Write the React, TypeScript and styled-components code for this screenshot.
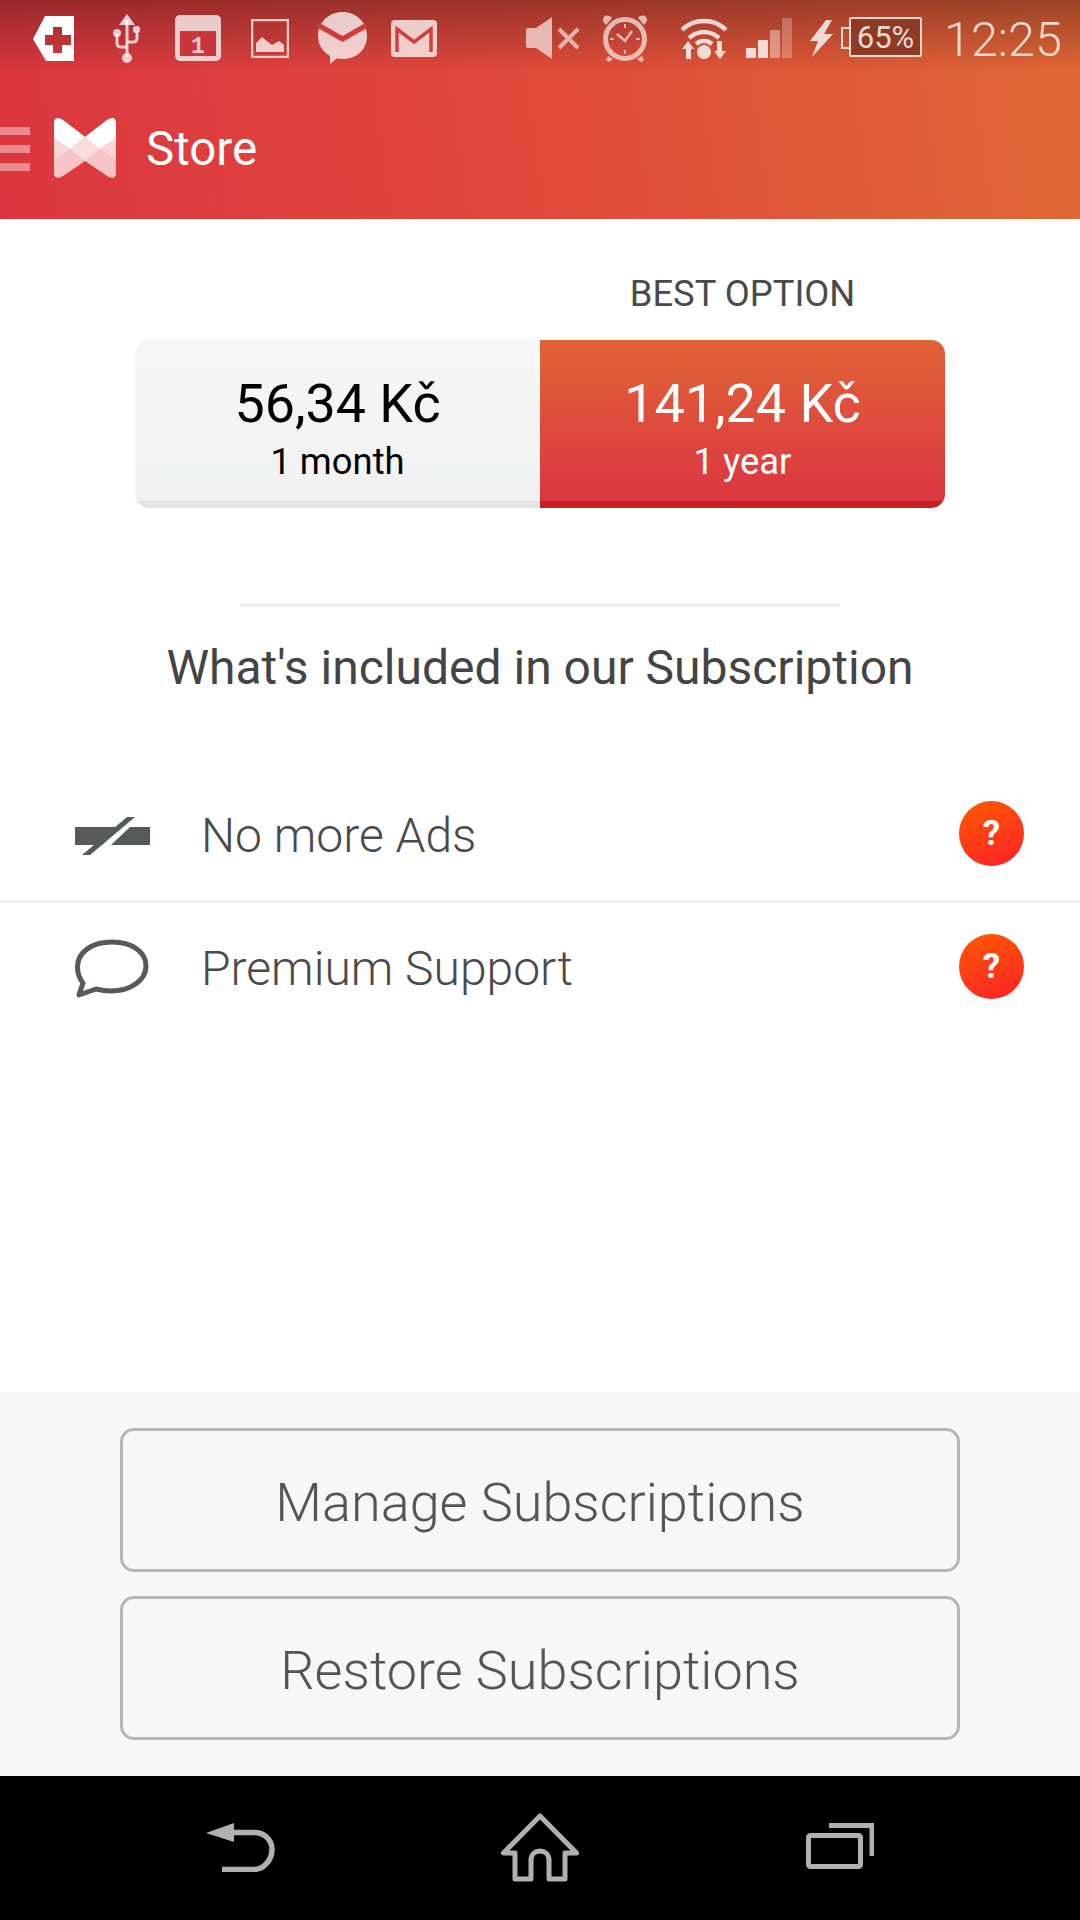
import React from 'react';
import styled, { createGlobalStyle } from 'styled-components';

const GlobalStyle = createGlobalStyle`
  html, body {
    margin: 0;
    padding: 0;
    background: #fff;
    font-family: Roboto, "Noto Sans", sans-serif;
  }
`;

const Screen = styled.div`
  width: 1080px;
  height: 1920px;
  display: flex;
  flex-direction: column;
  overflow: hidden;
`;

const Header = styled.header`
  height: 219px;
  flex: none;
  background:
    linear-gradient(180deg, rgba(60, 20, 20, 0.42) 0, rgba(60, 20, 20, 0) 72px),
    linear-gradient(82deg, #dc3640 0%, #e04a3a 50%, #e16835 100%);
`;

const StatusBar = styled.div`
  height: 76px;
  display: flex;
  align-items: center;
  color: rgba(255, 255, 255, 0.75);
`;

const StatusSlot = styled.span<{ $gap: number }>`
  display: flex;
  flex: none;
  margin-left: ${props => props.$gap}px;
`;

const Battery = styled.div`
  position: relative;
  margin-left: 16px;
  width: 73px;
  height: 40px;
  box-sizing: border-box;
  margin-top: -2px;
  border: 2.5px solid rgba(255, 255, 255, 0.8);
  border-radius: 2px;
  background: #8f3a22;
  display: flex;
  align-items: center;
  justify-content: center;
  font-size: 31px;
  color: rgba(255, 255, 255, 0.82);

  &::before {
    content: '';
    position: absolute;
    left: -10px;
    top: 8px;
    width: 8px;
    height: 18px;
    border: 2.5px solid rgba(255, 255, 255, 0.8);
    border-right: none;
  }
`;

const Clock = styled.div`
  margin-left: 22px;
  margin-top: 4px;
  font-size: 48.5px;
  font-weight: 300;
  color: rgba(255, 255, 255, 0.78);
  line-height: 1;
`;

const AppBar = styled.div`
  height: 143px;
  display: flex;
  align-items: center;
`;

const Burger = styled.div`
  width: 30px;
  display: flex;
  flex-direction: column;
  gap: 10px;
  margin-top: 3px;

  span {
    height: 8px;
    background: rgba(255, 255, 255, 0.42);
  }
`;

const LogoSlot = styled.div`
  display: flex;
  margin-left: 24px;
`;

const AppTitle = styled.div`
  margin-left: 30px;
  margin-top: 3px;
  font-size: 47.5px;
  color: #fff;
`;

const Content = styled.main`
  flex: 1;
  display: flex;
  flex-direction: column;
  background: #fff;
`;

const Pricing = styled.section`
  width: 810px;
  margin: 55px auto 0;
  display: grid;
  grid-template-columns: 405px 405px;
`;

const BestLabel = styled.div`
  grid-column: 2;
  height: 40px;
  line-height: 40px;
  margin-bottom: 26px;
  text-align: center;
  font-size: 36.4px;
  color: #4a4a4a;
`;

const Segments = styled.div`
  grid-column: 1 / 3;
  display: grid;
  grid-template-columns: 1fr 1fr;
  border-radius: 14px;
  overflow: hidden;
  height: 168px;
`;

const Segment = styled.div<{ $selected?: boolean }>`
  box-sizing: border-box;
  display: flex;
  flex-direction: column;
  align-items: center;
  padding-top: 32px;
  color: ${props => (props.$selected ? '#fff' : '#000')};
  background: ${props =>
    props.$selected
      ? 'linear-gradient(180deg, #e16336, #dc3641)'
      : 'linear-gradient(180deg, #f7f7f7, #f0f1f2)'};
  border-bottom: 7px solid ${props => (props.$selected ? '#c82023' : '#e3e4e4')};
`;

const Price = styled.div`
  font-size: 53.8px;
  line-height: 64px;
`;

const Period = styled.div`
  font-size: 36.4px;
  line-height: 44px;
  margin-top: 4px;
`;

const Rule = styled.hr`
  width: 600px;
  height: 4px;
  margin: 95px auto 0;
  border: none;
  background: #f0f0f0;
`;

const SectionTitle = styled.h2`
  margin: 31px 0 0;
  height: 60px;
  line-height: 60px;
  text-align: center;
  font-size: 48px;
  font-weight: 400;
  color: #444;
`;

const FeatureList = styled.div`
  margin-top: 73px;
`;

const Feature = styled.div<{ $divided?: boolean }>`
  box-sizing: border-box;
  height: ${props => (props.$divided ? 132 : 130)}px;
  display: flex;
  align-items: center;
  padding: 0 56px 0 75px;
  border-bottom: ${props => (props.$divided ? '3px solid #f0f0f0' : 'none')};
`;

const FeatureIcon = styled.div`
  width: 126px;
  flex: none;
  display: flex;
`;

const FeatureText = styled.div`
  flex: 1;
  font-size: 48px;
  font-weight: 300;
  color: #4a4a4a;
`;

const HelpBadge = styled.div`
  width: 65px;
  height: 65px;
  margin-bottom: 4px;
  border-radius: 50%;
  display: flex;
  align-items: center;
  justify-content: center;
  background: linear-gradient(160deg, #fe5a03, #fd2127);
  color: #fff;
  font-size: 35px;
  font-weight: 700;
`;

const Footer = styled.section`
  height: 384px;
  flex: none;
  box-sizing: border-box;
  padding: 36px 120px 0;
  display: flex;
  flex-direction: column;
  gap: 24px;
  background: #f7f7f7;
`;

const OutlineButton = styled.button`
  height: 144px;
  padding: 4px 0 0;
  border: 3px solid #b5b5b5;
  border-radius: 14px;
  background: transparent;
  font-family: inherit;
  font-size: 54px;
  font-weight: 300;
  color: #555;
`;

const NavBar = styled.nav`
  height: 144px;
  flex: none;
  background: #000;
  display: grid;
  grid-template-columns: repeat(3, 300px);
  padding: 0 90px;
`;

const NavSlot = styled.div<{ $shift: number }>`
  display: flex;
  align-items: center;
  justify-content: center;
  margin-top: ${props => props.$shift}px;
`;

const CrossIcon = () => (
  <svg width="41" height="45" viewBox="0 0 41 45">
    <path
      fill="#fff"
      fillRule="evenodd"
      d="M41 0H12L0 23l13 22h28ZM20 11h9v8h9v10h-9v8h-9v-8h-8V19h8Z"
    />
  </svg>
);

const UsbIcon = () => (
  <svg width="28" height="49" viewBox="0 0 28 49" fill="none" stroke="currentColor" strokeWidth="3">
    <path d="M15 6v37" />
    <path d="M15 33H9c-3 0-4-1-4-4v-9" />
    <path d="M15 28h6c3 0 4-1 4-4v-7" />
    <path fill="currentColor" stroke="none" d="M15 0l8 11H7Z" />
    <circle cx="15" cy="44" r="5" fill="currentColor" stroke="none" />
    <circle cx="5" cy="19" r="4" fill="currentColor" stroke="none" />
    <rect x="21" y="12" width="7" height="7" rx="3" fill="currentColor" stroke="none" />
  </svg>
);

const CalendarIcon = () => (
  <svg width="46" height="46" viewBox="0 0 46 46">
    <rect width="46" height="46" rx="5" fill="currentColor" />
    <rect x="5" y="16" width="36" height="25" fill="#c9373c" />
    <text x="23" y="38" textAnchor="middle" fontFamily="Liberation Mono, monospace" fontWeight="700" fontSize="23" fill="currentColor">1</text>
  </svg>
);

const PictureIcon = () => (
  <svg width="38" height="39" viewBox="0 0 38 39">
    <rect x="1" y="1" width="36" height="37" fill="none" stroke="currentColor" strokeWidth="2.5" />
    <path fill="currentColor" d="M5 33V24l6-6 6 5 4 3 7-4 5 4v7Z" />
  </svg>
);

const ChatIcon = () => (
  <svg width="49" height="52" viewBox="0 0 49 52">
    <path fill="currentColor" d="M24.5 0C38 0 49 10 49 24S38 47 24.5 47c-2 0-4-.3-5.5-.7L12 52l0-8C5 40 0 33 0 24 0 10 11 0 24.5 0Z" />
    <path fill="none" stroke="#d03b3c" strokeWidth="5" d="M0 13l24.5 14L49 13" />
  </svg>
);

const GmailIcon = () => (
  <svg width="46" height="37" viewBox="0 0 46 37">
    <rect width="46" height="37" rx="4" fill="currentColor" />
    <path fill="none" stroke="#d2403b" strokeWidth="3.5" d="M6 32V9l17 13L40 9v23" />
  </svg>
);

const MuteIcon = () => (
  <svg width="54" height="42" viewBox="0 0 54 42">
    <path fill="currentColor" opacity="0.85" d="M0 13q0-2 2-2h8L26 0v42L10 31H2q-2 0-2-2Z" />
    <path stroke="currentColor" opacity="0.8" strokeWidth="4" d="M33 12l19 19M52 12L33 31" />
  </svg>
);

const AlarmIcon = () => (
  <svg width="46" height="48" viewBox="0 0 46 48" fill="none" stroke="currentColor" opacity="0.85">
    <circle cx="23" cy="25" r="19.5" strokeWidth="5" />
    <path strokeWidth="2" d="M23 10v4M23 36v4M8 25h4M34 25h4" />
    <path strokeWidth="2.5" d="M15 20l8 7 7-10" />
    <path fill="currentColor" stroke="none" d="M4 11l6-7c-3-3-6-3-8-1s-1 5 2 8ZM42 11l-6-7c3-3 6-3 8-1s1 5-2 8ZM6 42l5 3-4 3-3-2ZM40 42l-5 3 4 3 3-2Z" />
  </svg>
);

const WifiIcon = () => (
  <svg width="46" height="42" viewBox="0 0 46 42" fill="none" stroke="#fff" strokeWidth="4.5" opacity="0.8">
    <path d="M1 13C13 1 33 1 45 13" />
    <path d="M8 21c9-8 21-8 30 0" />
    <path d="M15 27c5-4 11-4 16 0" />
    <circle cx="23" cy="35" r="7" fill="#fff" stroke="none" />
    <path fill="#fff" stroke="none" d="M7 24l6 8h-3v10H5V32H1ZM39 42l-6-8h3V24h5v10h4Z" />
  </svg>
);

const SignalIcon = () => (
  <svg width="46" height="40" viewBox="0 0 46 40" fill="#fff">
    <rect x="0" y="30" width="10" height="10" opacity="0.8" />
    <rect x="12" y="22" width="10" height="18" opacity="0.8" />
    <rect x="24" y="12" width="10" height="28" opacity="0.4" />
    <rect x="36" y="0" width="10" height="40" opacity="0.25" />
  </svg>
);

const BoltIcon = () => (
  <svg width="23" height="37" viewBox="0 0 23 37">
    <path fill="#fff" opacity="0.8" d="M16 0L0 21h8L2 37 23 14h-9L22 0Z" />
  </svg>
);

const LogoIcon = () => (
  <svg width="62" height="60" viewBox="0 0 62 60">
    <path fill="#f6c4c6" d="M3 0q3 0 6 2l22 17L53 2q3-2 6-2 3 1 3 5v50q0 4-3 5-3 0-6-2L31 43 9 58q-3 2-6 2-3-1-3-5V5q0-4 3-5Z" />
    <path fill="#fff" d="M3 0q3 0 6 2l22 17L53 2q3-2 6-2 3 1 3 5v15L46 31 31 19 16 31 0 20V5q0-4 3-5Z" />
    <path fill="#f8d6d6" d="M0 20l16 11L0 42ZM62 20L46 31l16 11Z" />
    <path fill="#f9dedd" d="M16 31L31 19l15 12-15 12Z" />
  </svg>
);

const NoAdsIcon = () => (
  <svg width="75" height="38" viewBox="0 0 75 38">
    <rect y="10" width="75" height="18" fill="#555a5a" />
    <path fill="#fff" d="M46 10h9L36 28h-9Z" />
    <path fill="#555a5a" d="M52 0h8L15 38H7Z" />
  </svg>
);

const BubbleIcon = () => (
  <svg width="74" height="59" viewBox="0 0 74 59">
    <path
      fill="none"
      stroke="#555a5a"
      strokeWidth="5"
      strokeLinejoin="round"
      d="M37 3c20 0 34 10 34 24S56 52 36 52c-6 0-11-1-15-2L4 56l4-12C4 39 2.500 34 2.500 28 2.500 13 17 3 37 3Z"
    />
  </svg>
);

const BackIcon = () => (
  <svg width="69" height="49" viewBox="0 0 69 49">
    <path fill="#b0b0b0" d="M0 10L28 0v19Z" />
    <path fill="none" stroke="#b0b0b0" strokeWidth="5.500" d="M24 9.500h24c10 0 18 7 18 17s-8 20-18 20H16" />
  </svg>
);

const HomeIcon = () => (
  <svg width="78" height="70" viewBox="0 0 78 70">
    <path
      fill="none"
      stroke="#b0b0b0"
      strokeWidth="5"
      strokeLinejoin="round"
      d="M39 4L2.500 41H14v26h16V48c0-12 18-12 18 0v19h16V41h11.500Z"
    />
  </svg>
);

const RecentsIcon = () => (
  <svg width="68" height="46" viewBox="0 0 68 46" fill="none" stroke="#b0b0b0">
    <rect x="2.500" y="12.500" width="52" height="31" rx="2" strokeWidth="5" />
    <path strokeWidth="5" d="M23 2.500h43V33" />
  </svg>
);

export default function App() {
  return (
    <Screen>
      <GlobalStyle />
      <Header>
        <StatusBar>
          <StatusSlot $gap={33}><CrossIcon /></StatusSlot>
          <StatusSlot $gap={38}><UsbIcon /></StatusSlot>
          <StatusSlot $gap={35}><CalendarIcon /></StatusSlot>
          <StatusSlot $gap={30}><PictureIcon /></StatusSlot>
          <StatusSlot $gap={29}><ChatIcon /></StatusSlot>
          <StatusSlot $gap={24}><GmailIcon /></StatusSlot>
          <StatusSlot $gap={89}><MuteIcon /></StatusSlot>
          <StatusSlot $gap={22}><AlarmIcon /></StatusSlot>
          <StatusSlot $gap={33}><WifiIcon /></StatusSlot>
          <StatusSlot $gap={19}><SignalIcon /></StatusSlot>
          <StatusSlot $gap={18}><BoltIcon /></StatusSlot>
          <Battery>65%</Battery>
          <Clock>12:25</Clock>
        </StatusBar>
        <AppBar>
          <Burger>
            <span />
            <span />
            <span />
          </Burger>
          <LogoSlot><LogoIcon /></LogoSlot>
          <AppTitle>Store</AppTitle>
        </AppBar>
      </Header>

      <Content>
        <Pricing>
          <BestLabel>BEST OPTION</BestLabel>
          <Segments>
            <Segment>
              <Price>56,34 Kč</Price>
              <Period>1 month</Period>
            </Segment>
            <Segment $selected>
              <Price>141,24 Kč</Price>
              <Period>1 year</Period>
            </Segment>
          </Segments>
        </Pricing>

        <Rule />
        <SectionTitle>What's included in our Subscription</SectionTitle>

        <FeatureList>
          <Feature $divided>
            <FeatureIcon><NoAdsIcon /></FeatureIcon>
            <FeatureText>No more Ads</FeatureText>
            <HelpBadge>?</HelpBadge>
          </Feature>
          <Feature>
            <FeatureIcon><BubbleIcon /></FeatureIcon>
            <FeatureText>Premium Support</FeatureText>
            <HelpBadge>?</HelpBadge>
          </Feature>
        </FeatureList>
      </Content>

      <Footer>
        <OutlineButton>Manage Subscriptions</OutlineButton>
        <OutlineButton>Restore Subscriptions</OutlineButton>
      </Footer>

      <NavBar>
        <NavSlot $shift={-1}><BackIcon /></NavSlot>
        <NavSlot $shift={-2}><HomeIcon /></NavSlot>
        <NavSlot $shift={-4}><RecentsIcon /></NavSlot>
      </NavBar>
    </Screen>
  );
}
